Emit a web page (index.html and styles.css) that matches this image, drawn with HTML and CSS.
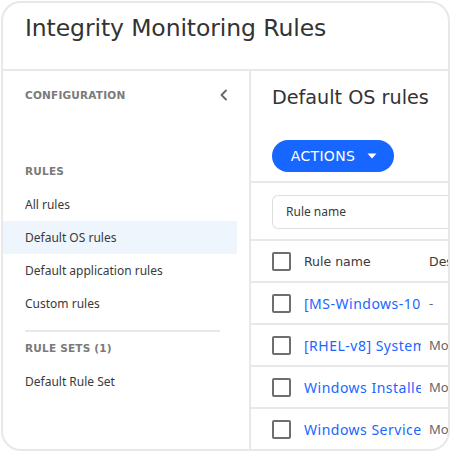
FILE: index.html
```html
<!DOCTYPE html>
<html>
<head>
<meta charset="utf-8">
<link rel="stylesheet" href="styles.css">
</head>
<body>
<div class="card">
  <div class="header"><h1 class="title">Integrity Monitoring Rules</h1></div>
  <div class="body">
    <aside class="sidebar">
      <div class="config-row">
        <span class="label">CONFIGURATION</span>
        <svg class="chev" width="10" height="12" viewBox="0 0 10 12"><path d="M7 1.5 L2.5 6 L7 10.5" fill="none" stroke="#666" stroke-width="1.8" stroke-linecap="round" stroke-linejoin="round"/></svg>
      </div>
      <div class="label section">RULES</div>
      <div class="nav-item">All rules</div>
      <div class="nav-item active">Default OS rules</div>
      <div class="nav-item">Default application rules</div>
      <div class="nav-item">Custom rules</div>
      <div class="divider"></div>
      <div class="label section2">RULE SETS (1)</div>
      <div class="nav-item">Default Rule Set</div>
    </aside>
    <main class="main">
      <div class="main-top">
        <h2 class="subtitle">Default OS rules</h2>
        <button class="actions">ACTIONS <svg width="10" height="6" viewBox="0 0 10 6"><path d="M0.5 0.5 L9.5 0.5 L5 5.5 Z" fill="#fff"/></svg></button>
      </div>
      <div class="search-wrap"><div class="search">Rule name</div></div>
      <div class="table">
        <div class="row head">
          <span class="cb"></span><span class="name">Rule name</span><span class="desc">Description</span>
        </div>
        <div class="row">
          <span class="cb"></span><span class="name link">[MS-Windows-10] System files</span><span class="desc">-</span>
        </div>
        <div class="row">
          <span class="cb"></span><span class="name link">[RHEL-v8] System files</span><span class="desc">Monitors</span>
        </div>
        <div class="row">
          <span class="cb"></span><span class="name link">Windows Installer</span><span class="desc">Monitors</span>
        </div>
        <div class="row">
          <span class="cb"></span><span class="name link">Windows Services</span><span class="desc">Monitors</span>
        </div>
      </div>
    </main>
  </div>
</div>
</body>
</html>
```
FILE: styles.css
```css
* { box-sizing: border-box; }
html, body { margin: 0; padding: 0; background: #fff; }
body { font-family: "Noto Sans", "DejaVu Sans", sans-serif; color: #3a3a3a; }
.card {
  margin: 1px 0 0 1px;
  width: 449px;
  height: 450px;
  border: 2px solid #e8e8e8;
  border-radius: 20px;
  overflow: hidden;
  display: flex;
  flex-direction: column;
}
.header {
  height: 68px;
  flex: none;
  border-bottom: 2px solid #e8e8e8;
  padding: 10px 0 0 22px;
}
.title {
  margin: 0;
  font-family: "DejaVu Sans", sans-serif;
  font-weight: 400;
  font-size: 23.5px;
  line-height: 30px;
  color: #333;
  letter-spacing: -0.1px;
}
.body { flex: 1; display: flex; min-height: 0; }
.sidebar {
  width: 248px;
  flex: none;
  border-right: 2px solid #e8e8e8;
  padding: 12px 12px 0 0;
}
.config-row {
  height: 24px;
  display: flex;
  align-items: center;
  justify-content: space-between;
  padding-left: 22px;
  padding-right: 8px;
}
.label {
  font-family: "DejaVu Sans", sans-serif;
  font-weight: 700;
  font-size: 10.5px;
  color: #7a7a7a;
  letter-spacing: 0.2px;
}
.section { margin-top: 54px; height: 20px; line-height: 20px; padding-left: 22px; margin-bottom: 7px; }
.section2 { height: 20px; line-height: 20px; padding-left: 22px; margin-top: 6px; margin-bottom: 7px; }
.nav-item {
  height: 33px;
  line-height: 33px;
  padding-left: 22px;
  font-size: 12px;
  color: #3a3a3a;
}
.nav-item.active { background: #eff5fd; }
.divider { height: 2px; background: #e8e8e8; margin: 10px 17px 0 22px; }
.main { flex: 1; min-width: 0; overflow: hidden; }
.main-top {
  padding: 13px 0 0 21px;
  height: 112px;
  border-bottom: 2px solid #e8e8e8;
}
.subtitle {
  margin: 0;
  font-family: "DejaVu Sans", sans-serif;
  font-weight: 400;
  font-size: 19.2px;
  line-height: 28px;
  color: #333;
}
.actions {
  margin-top: 28px;
  width: 122px;
  height: 32px;
  border: none;
  border-radius: 16px;
  background: #1766ff;
  color: #fff;
  font-family: "DejaVu Sans", sans-serif;
  font-size: 14px;
  font-weight: 500;
  letter-spacing: 0.3px;
  display: flex;
  align-items: center;
  justify-content: center;
  gap: 12px;
  padding: 0 0 0 2px;
}
.search-wrap {
  padding: 12px 0 10px 21px;
  border-bottom: 2px solid #e8e8e8;
}
.search {
  width: 240px;
  height: 34px;
  border: 1px solid #dedede;
  border-right: none;
  border-radius: 6px 0 0 6px;
  padding-left: 13px;
  line-height: 32px;
  font-size: 12px;
  color: #3a3a3a;
}
.row {
  height: 42px;
  display: flex;
  align-items: center;
  padding-left: 21px;
  border-bottom: 2px solid #e8e8e8;
  white-space: nowrap;
}
.cb {
  width: 19px;
  height: 19px;
  border: 2px solid #6e6e6e;
  border-radius: 2px;
  flex: none;
}
.name {
  width: 117px;
  margin-left: 13px;
  overflow: hidden;
  flex: none;
  font-size: 13px;
}
.head .name { font-family: "DejaVu Sans", sans-serif; font-size: 12.5px; color: #3a3a3a; }
.link { color: #1a66ff; font-size: 14px; letter-spacing: 0.5px; }
.desc { margin-left: 8px; font-size: 13px; color: #666; }
.head .desc { font-family: "DejaVu Sans", sans-serif; font-size: 12.5px; color: #3a3a3a; }
```
